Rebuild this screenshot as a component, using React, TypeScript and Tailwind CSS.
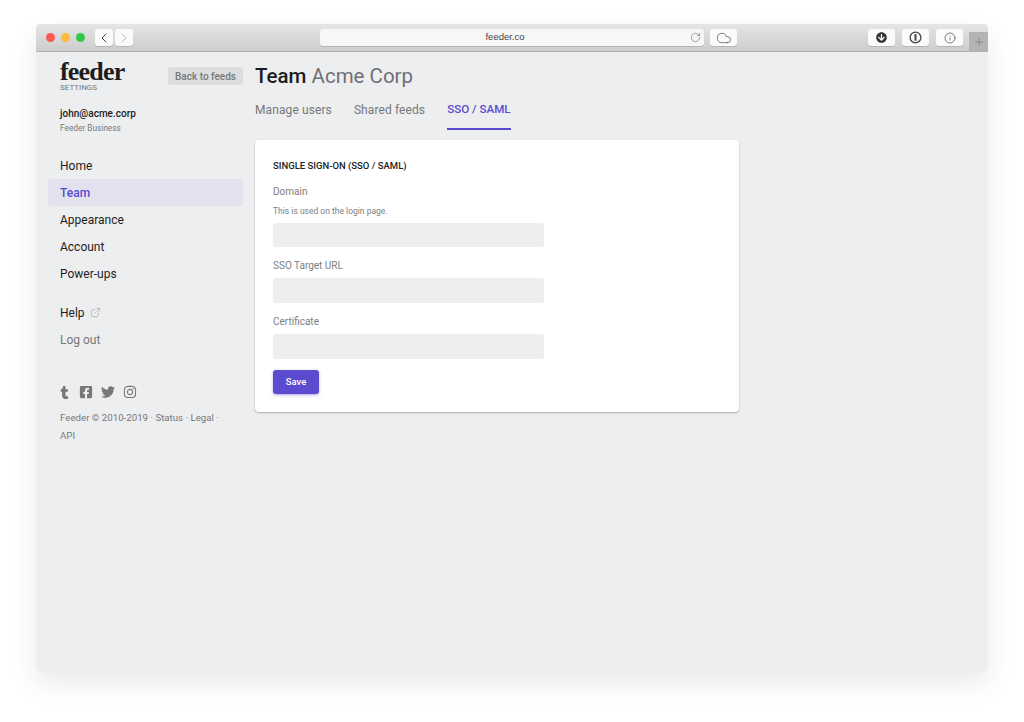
import { ChevronLeft, ChevronRight, RotateCw, Cloud, ExternalLink, Info, Plus } from "lucide-react";
import { FaTumblr, FaFacebookSquare, FaTwitter, FaInstagram, FaArrowCircleDown } from "react-icons/fa";

const navItems = ["Home", "Team", "Appearance", "Account", "Power-ups"];

function Dot({ color }: { color: string }) {
  return <span className={`size-[9px] rounded-full ${color}`} />;
}

function ToolButton({ children, width }: { children: React.ReactNode; width: string }) {
  return (
    <div className={`flex h-[17px] items-center justify-center rounded-[3px] bg-[#fbfbfb] shadow-[0_1px_0_#b5b5b5] ${width}`}>
      {children}
    </div>
  );
}

function Field({ label }: { label: string }) {
  return (
    <>
      <label className="block h-[14px] text-[10px] leading-[16px] text-[#7d7e80]">{label}</label>
      <div className="mt-[6px] h-[25px] w-[271px] rounded-[3px] bg-[#edeef0]" />
    </>
  );
}

export default function App() {
  return (
    <div className="min-h-[722px] bg-white pt-[24px] pl-[36px] font-['Roboto',sans-serif]">
      <div className="flex h-[647px] w-[952px] flex-col overflow-hidden rounded-[4px] bg-[#edeef0] shadow-[0_12px_28px_rgba(0,0,0,0.09)]">
        {/* browser chrome */}
        <div className="flex h-[28px] items-center border-b border-[#b0b0b0] bg-gradient-to-b from-[#e6e6e6] to-[#cdcdcd]">
          <div className="ml-[10px] flex gap-[6px]">
            <Dot color="bg-[#fc5753]" />
            <Dot color="bg-[#fdbc40]" />
            <Dot color="bg-[#33c748]" />
          </div>
          <div className="ml-[10px] flex gap-[2px]">
            <ToolButton width="w-[18px]">
              <ChevronLeft size={16} strokeWidth={1.5} className="text-[#444]" />
            </ToolButton>
            <ToolButton width="w-[18px]">
              <ChevronRight size={16} strokeWidth={1.2} className="text-[#aaa]" />
            </ToolButton>
          </div>
          <div className="relative ml-[187px] flex h-[17px] w-[384px] items-center justify-center rounded-[3px] bg-[#f7f7f7] pr-[14px] shadow-[0_1px_0_#b5b5b5]">
            <span className="font-['Liberation_Sans',sans-serif] text-[9.5px] text-[#444]">feeder.co</span>
            <RotateCw size={11} strokeWidth={1.3} className="absolute right-[3px] text-[#666]" />
          </div>
          <div className="ml-[6px]">
            <ToolButton width="w-[27px]">
              <Cloud size={16} strokeWidth={1} className="text-[#444]" />
            </ToolButton>
          </div>
          <div className="ml-[131px] flex gap-[7px]">
            <ToolButton width="w-[27px]">
              <FaArrowCircleDown size={11} className="text-[#333]" />
            </ToolButton>
            <ToolButton width="w-[27px]">
              <svg width="13" height="13" viewBox="0 0 13 13" className="text-[#444]">
                <circle cx="6.5" cy="6.5" r="5.4" fill="none" stroke="currentColor" strokeWidth="1.3" />
                <path d="M5.3 3.3h2.2v6.4H5.6V5.2h-.3z" fill="currentColor" />
              </svg>
            </ToolButton>
            <ToolButton width="w-[27px]">
              <Info size={12} strokeWidth={1.5} className="text-[#555]" />
            </ToolButton>
          </div>
          <div className="ml-[6px] flex h-[19px] w-[19px] items-center justify-center self-end bg-[#b4b4b4]">
            <Plus size={12} strokeWidth={1} className="text-[#666]" />
          </div>
        </div>

        {/* page */}
        <div className="flex flex-1 pl-[12px]">
          <aside className="w-[195px] shrink-0">
            <div className="flex justify-between">
              <div className="pl-[12px]">
                <div className="mt-[8px] h-[24px] font-['Liberation_Serif',serif] text-[26px] leading-[24px] font-bold tracking-[-0.8px] text-[#1d1d1d]">
                  feeder
                </div>
                <div className="h-[8px] text-[8px] leading-[8px] text-[#77787a]">SETTINGS</div>
              </div>
              <div className="mt-[15px] flex h-[18px] w-[75px] items-center justify-center rounded-[3px] bg-[#dcdddf] text-[10px] font-medium text-[#77787a]">
                Back to feeds
              </div>
            </div>
            <div className="mt-[14px] h-[15px] pl-[12px] text-[10px] leading-[15px] font-medium text-[#1d1d1d]">john@acme.corp</div>
            <div className="h-[14px] pl-[12px] text-[8.3px] leading-[14px] text-[#77787a]">Feeder Business</div>

            <nav className="mt-[17px]">
              {navItems.map((item) => (
                <div
                  key={item}
                  className={`flex h-[27px] items-center rounded-[3px] px-[12px] text-[12px] ${
                    item === "Team" ? "bg-[#e2e2ee] font-medium text-[#5b4ccf]" : "text-[#1d1d1d]"
                  }`}
                >
                  {item}
                </div>
              ))}
            </nav>
            <div className="mt-[12px]">
              <div className="flex h-[27px] items-center gap-[5px] px-[12px] text-[12px] text-[#1d1d1d]">
                Help
                <ExternalLink size={11} strokeWidth={1} className="text-[#888]" />
              </div>
              <div className="flex h-[27px] items-center px-[12px] text-[12px] text-[#77787a]">Log out</div>
            </div>

            <div className="mt-[32px] flex h-[14px] items-center gap-[8px] px-[12px] text-[#77787a]">
              <FaTumblr size={13} className="-ml-[2px]" />
              <FaFacebookSquare size={14} />
              <FaTwitter size={14} />
              <FaInstagram size={14} />
            </div>
            <p className="mt-[10px] px-[12px] text-[9.7px] leading-[18px] text-[#77787a]">
              Feeder © 2010-2019 · Status · Legal · API
            </p>
          </aside>

          <main className="ml-[12px] flex-1">
            <h1 className="mt-[10px] h-[28px] text-[20.5px] leading-[28px] font-medium text-[#1d1d1d]">
              Team <span className="font-normal text-[#6f7072]">Acme Corp</span>
            </h1>
            <div className="mt-[3px] flex h-[37px] gap-[22px] text-[12px]">
              <div className="pt-[8px] tracking-[0.1px] text-[#77787a]">Manage users</div>
              <div className="pt-[8px] tracking-[0.1px] text-[#77787a]">Shared feeds</div>
              <div className="border-b-2 border-[#5b4ccf] pt-[8px] text-[11.6px] font-medium text-[#5b4ccf]">SSO / SAML</div>
            </div>

            <section className="mt-[10px] h-[272px] w-[484px] rounded-[4px] bg-white px-[18px] pt-[19px] shadow-[0_1px_2px_rgba(0,0,0,0.28)]">
              <h2 className="h-[14px] text-[9.5px] leading-[14px] font-medium text-[#1d1d1d]">SINGLE SIGN-ON (SSO / SAML)</h2>
              <label className="mt-[12px] block h-[14px] text-[10px] leading-[14px] text-[#7d7e80]">Domain</label>
              <p className="mt-[5px] h-[14px] text-[8.5px] leading-[14px] text-[#7d7e80]">This is used on the login page.</p>
              <div className="mt-[5px] mb-[11px] h-[24px] w-[271px] rounded-[3px] bg-[#edeef0]" />
              <Field label="SSO Target URL" />
              <div className="h-[11px]" />
              <Field label="Certificate" />
              <button className="mt-[11px] flex h-[24px] w-[46px] items-center justify-center rounded-[3px] bg-[#5b4ccf] text-[9.5px] font-medium text-white shadow-[0_1px_3px_rgba(91,76,207,0.5)]">
                Save
              </button>
            </section>
          </main>
        </div>
      </div>
    </div>
  );
}
